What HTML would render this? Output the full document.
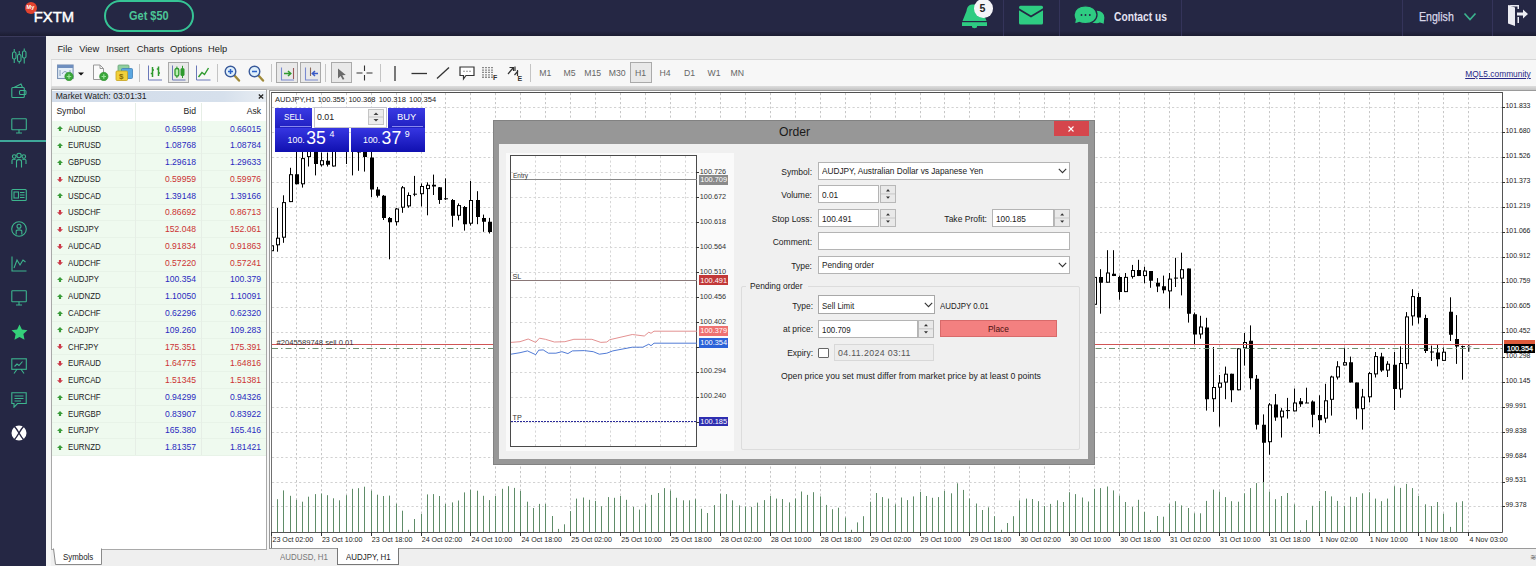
<!DOCTYPE html><html><head><meta charset="utf-8"><style>
*{box-sizing:border-box;margin:0;padding:0}
html,body{width:1536px;height:566px;overflow:hidden;background:#f0f0f0;font-family:"Liberation Sans", sans-serif;}
.a{position:absolute}
.t{position:absolute;white-space:nowrap;line-height:1}
</style></head><body>
<div class="a" style="left:0;top:0;width:1536px;height:36px;background:#252744"></div>
<div class="a" style="left:0;top:36px;width:46px;height:530px;background:#252744"></div>
<div class="a" style="left:0;top:31px;width:1536px;height:5px;background:linear-gradient(rgba(20,20,35,0),rgba(20,20,35,0.55))"></div>
<div class="a" style="left:24.5px;top:1.5px;width:12px;height:12px;border-radius:50%;background:#e2432f"></div>
<div class="t" style="left:26.6px;top:4.8px;font-size:5.6px;font-weight:bold;color:#fff">My</div>
<div class="t" style="left:33.8px;top:9.8px;font-size:14.8px;color:#fff;-webkit-text-stroke:0.45px #fff">FXTM</div>
<div class="a" style="left:104px;top:0px;width:90px;height:32px;border:2px solid #36c495;border-radius:16px"></div>
<div class="t" style="left:128.5px;top:10px;font-size:12.2px;font-weight:bold;color:#4cc597;transform:scaleX(0.9);transform-origin:0 0">Get $50</div>
<div class="a" style="left:1003px;top:0;width:1px;height:36px;background:#34345a"></div>
<div class="a" style="left:1059px;top:0;width:1px;height:36px;background:#34345a"></div>
<div class="a" style="left:1181px;top:0;width:1px;height:36px;background:#34345a"></div>
<div class="a" style="left:1402px;top:0;width:1px;height:36px;background:#34345a"></div>
<div class="a" style="left:1492px;top:0;width:1px;height:36px;background:#34345a"></div>
<svg class="a" style="left:955px;top:0px" width="40" height="32" viewBox="0 0 40 32"><path d="M17 4.5 C13 5 12 8 11.5 11 L7.5 21 H31.5 L27.5 11 C27 8 25 5 21 4.5Z" fill="#2ecc82"/><path d="M7 22.2 H32 V26 H7Z" fill="#2ecc82"/><path d="M17 26 H22 V27 C22 28.5 17 28.5 17 27Z" fill="#2ecc82"/></svg>
<div class="a" style="left:974px;top:-0.8px;width:18.6px;height:18.6px;border-radius:50%;background:#f4f4f8"></div>
<div class="t" style="left:979.6px;top:3.2px;font-size:10.6px;font-weight:bold;color:#222">5</div>
<svg class="a" style="left:1018px;top:5px" width="26" height="21" viewBox="0 0 26 21"><rect x="1" y="0.8" width="24" height="18.8" rx="1.5" fill="#2ecc82"/><path d="M0.5 4 L13 11.5 L25.5 4" fill="none" stroke="#252744" stroke-width="1.9"/></svg>
<svg class="a" style="left:1072px;top:4px" width="34" height="23" viewBox="0 0 34 23"><path d="M25 6 C30 6 33 9.5 33 13.5 C33 16.5 32 18.5 32.5 20.5 L28 19.2 C27 19.7 26 20 25 20 C20 20 17 17 17 13 C17 9 20 6 25 6Z" fill="#2ecc82" stroke="#252744" stroke-width="1.3"/><path d="M13.5 1.8 C20 1.8 25 5.5 25 10.8 C25 16 20 19.6 13.5 19.6 C11 19.6 9 19.2 7.5 18.5 L2.5 20.2 L3.2 15.5 C2.3 14 2 12.5 2 10.8 C2 5.5 7 1.8 13.5 1.8Z" fill="#2ecc82" stroke="#252744" stroke-width="1.3"/><circle cx="9.5" cy="11" r="0.95" fill="#252744"/><circle cx="13.5" cy="11" r="0.95" fill="#252744"/><circle cx="17.8" cy="11" r="0.95" fill="#252744"/></svg>
<div class="t" style="left:1113.5px;top:11px;font-size:12.2px;font-weight:bold;color:#e4e2f2;transform:scaleX(0.84);transform-origin:0 0">Contact us</div>
<div class="t" style="left:1418.5px;top:11px;font-size:12.2px;color:#d8d6e8;-webkit-text-stroke:0.25px #d8d6e8;transform:scaleX(0.87);transform-origin:0 0">English</div>
<svg class="a" style="left:1463px;top:12px" width="14" height="10" viewBox="0 0 14 10"><path d="M1.5 1.5 L7 7.5 L12.5 1.5" fill="none" stroke="#3bb38e" stroke-width="1.7"/></svg>
<svg class="a" style="left:1507px;top:4px" width="22" height="23" viewBox="0 0 22 23"><path d="M1 1 H12 V5 H10.5 V2.5 H5 L1 1Z" fill="#e8e8f0"/><path d="M10.5 13 V19 H12 V13Z" fill="#e8e8f0"/><path d="M1 1 L8 3.5 V22 L1 19.5Z" fill="#ececf2"/><path d="M10 8.5 H16 V5.5 L21 10 L16 14.5 V11.5 H10Z" fill="#ececf2"/></svg>
<div class="a" style="left:0;top:36px;width:46px;height:1px;background:#3a3a5c"></div>
<div class="a" style="left:0;top:140px;width:46px;height:1.6px;background:#3fa89a"></div>
<svg class="a" style="left:11px;top:48px" width="16" height="16" viewBox="0 0 16 16" fill="none" stroke="#3db58e" stroke-width="1.1"><rect x="1.5" y="4" width="3.5" height="7" rx="1.5"/><path d="M3.25 1V4M3.25 11V15"/><rect x="6.5" y="6.5" width="3.5" height="7" rx="1.5"/><path d="M8.25 3V6.5M8.25 13.5V15.5"/><rect x="11.5" y="3" width="3.5" height="7" rx="1.5"/><path d="M13.25 0.5V3M13.25 10V15.5"/></svg>
<svg class="a" style="left:11px;top:82.5px" width="16" height="16" viewBox="0 0 16 16" fill="none" stroke="#3db58e" stroke-width="1.1"><rect x="0.8" y="4.5" width="12.5" height="10" rx="1"/><path d="M3 4.5 L10 1 L11.5 4.5"/><rect x="8.5" y="7.5" width="6.5" height="4" rx="1"/></svg>
<svg class="a" style="left:11px;top:117.5px" width="16" height="16" viewBox="0 0 16 16" fill="none" stroke="#3db58e" stroke-width="1.1"><rect x="0.8" y="0.8" width="14.5" height="11" rx="0.5"/><path d="M8 11.8V14.5M5 15H11"/></svg>
<svg class="a" style="left:11px;top:152px" width="16" height="16" viewBox="0 0 16 16" fill="none" stroke="#3db58e" stroke-width="1.1"><circle cx="8" cy="3.5" r="2.2"/><circle cx="3.2" cy="4.5" r="1.8"/><circle cx="12.8" cy="4.5" r="1.8"/><path d="M5.5 15.5V9.5C5.5 7 10.5 7 10.5 9.5V15.5"/><path d="M1 12V8.5C1 7 3 6.8 4.5 7.5M15 12V8.5C15 7 13 6.8 11.5 7.5"/></svg>
<svg class="a" style="left:11px;top:187px" width="16" height="16" viewBox="0 0 16 16" fill="none" stroke="#3db58e" stroke-width="1.1"><rect x="0.8" y="2.5" width="14.5" height="11" rx="1"/><rect x="3" y="5" width="4.5" height="6"/><path d="M9 5.5H13.5M9 8H13.5M9 10.5H13.5"/></svg>
<svg class="a" style="left:11px;top:221px" width="16" height="16" viewBox="0 0 16 16" fill="none" stroke="#3db58e" stroke-width="1.1"><circle cx="8" cy="8" r="7.3"/><circle cx="8" cy="5.3" r="2"/><path d="M5.2 13.5V10C5.2 8.5 10.8 8.5 10.8 10V13.5"/></svg>
<svg class="a" style="left:11px;top:255.5px" width="16" height="16" viewBox="0 0 16 16" fill="none" stroke="#3db58e" stroke-width="1.1"><path d="M1 0.5V15H15.5"/><path d="M3 12 L6 4 L9 9 L12 4 L14.5 6"/></svg>
<svg class="a" style="left:11px;top:289.5px" width="16" height="16" viewBox="0 0 16 16" fill="none" stroke="#3db58e" stroke-width="1.1"><rect x="0.8" y="0.8" width="14.5" height="11" rx="0.5"/><path d="M8 11.8V14.5M5 15H11"/></svg>
<svg class="a" style="left:10.5px;top:323.5px" width="17" height="17" viewBox="0 0 17 17"><path d="M8.5 0.5 L10.9 5.6 L16.5 6.3 L12.4 10.1 L13.5 15.8 L8.5 13 L3.5 15.8 L4.6 10.1 L0.5 6.3 L6.1 5.6Z" fill="#35d07a"/></svg>
<svg class="a" style="left:11px;top:358px" width="16" height="16" viewBox="0 0 16 16" fill="none" stroke="#3db58e" stroke-width="1.1"><rect x="0.8" y="0.8" width="14.5" height="10.5"/><path d="M3.5 8.5 L6 6 L8 7.5 L11.5 3.5M3 15.5 L6 11.3M13 15.5 L10 11.3"/></svg>
<svg class="a" style="left:11px;top:392px" width="16" height="16" viewBox="0 0 16 16" fill="none" stroke="#3db58e" stroke-width="1.1"><path d="M0.8 0.8H15.2V11.5H6.5L3 15.2V11.5H0.8Z"/><path d="M3.5 4H12.5M3.5 6.5H12.5M3.5 9H10"/></svg>
<svg class="a" style="left:11px;top:424.5px" width="16" height="16" viewBox="0 0 16 16"><circle cx="8" cy="8" r="7.5" fill="#fff"/><path d="M3.5 1.5 C7 5 9 11 12.5 14.5 M12.5 1.5 C9 5 7 11 3.5 14.5" stroke="#232340" stroke-width="1.4" fill="none"/></svg>
<div class="a" style="left:46px;top:36px;width:1490px;height:530px;background:#f0f0f0"></div>
<div class="a" style="left:46px;top:36px;width:1490px;height:530px;background:#f6f6f6"></div>
<div class="a" style="left:46px;top:36px;width:1490px;height:23.5px;background:#efefef"></div>
<div class="a" style="left:51px;top:59px;width:1485px;height:1px;background:#d8d8d8"></div>
<div class="t" style="left:57.4px;top:44.8px;font-size:9.3px;color:#222">File</div>
<div class="t" style="left:79.2px;top:44.8px;font-size:9.3px;color:#222">View</div>
<div class="t" style="left:106.2px;top:44.8px;font-size:9.3px;color:#222">Insert</div>
<div class="t" style="left:136.8px;top:44.8px;font-size:9.3px;color:#222">Charts</div>
<div class="t" style="left:170px;top:44.8px;font-size:9.3px;color:#222">Options</div>
<div class="t" style="left:208px;top:44.8px;font-size:9.3px;color:#222">Help</div>
<div class="a" style="left:51px;top:60px;width:1485px;height:27px;background:#f7f7f7;border-left:1px solid #e4e4e4"></div>
<div class="a" style="left:51px;top:86px;width:1485px;height:4px;background:linear-gradient(#dedede,#c4c4c4)"></div>
<div class="a" style="left:51px;top:548.5px;width:1485px;height:17.5px;background:#efefef"></div>
<svg class="a" style="left:57px;top:64px" width="28" height="17" viewBox="0 0 28 17"><rect x="0.6" y="1" width="15.5" height="13.5" fill="#e4eef8" stroke="#7b93b5" stroke-width="1.1"/><rect x="0.6" y="1" width="15.5" height="3" fill="#6f8fbf"/><path d="M3 12 V6 M5 10 Q8 5 11 10 M13 6 V12" stroke="#7f97b7" fill="none" stroke-width="0.9"/><circle cx="12" cy="12.5" r="4.2" fill="#3aa63a" stroke="#2f8f2f" stroke-width="0.6"/><path d="M12 10.3V14.7M9.8 12.5H14.2" stroke="#9be39b" stroke-width="1.2"/><path d="M21 8.5 H27 L24 11.5Z" fill="#111"/></svg>
<svg class="a" style="left:92px;top:64px" width="17" height="17" viewBox="0 0 17 17"><path d="M1.5 1 H8 L11.5 4.5 V15.5 H1.5Z" fill="#fbfbfb" stroke="#999" stroke-width="1"/><path d="M8 1 V4.5 H11.5" fill="none" stroke="#999"/><circle cx="11.8" cy="12.5" r="4.2" fill="#3aa63a" stroke="#2f8f2f" stroke-width="0.6"/><path d="M11.8 10.3V14.7M9.6 12.5H14" stroke="#9be39b" stroke-width="1.2"/></svg>
<svg class="a" style="left:115px;top:64px" width="19" height="18" viewBox="0 0 19 18"><rect x="3" y="1" width="11" height="9" rx="1" fill="#8fcf9f" stroke="#6aa37a" stroke-width="0.8"/><rect x="6.5" y="4.5" width="11" height="10" rx="1" fill="#5aa6e0" stroke="#3f7fb8" stroke-width="0.8"/><rect x="1" y="7" width="11.5" height="9.5" rx="1" fill="#f2d03a" stroke="#c5a21e" stroke-width="0.8"/><text x="4" y="15" font-size="8" font-weight="bold" fill="#8a6a00" font-family="Liberation Sans">$</text></svg>
<div class="a" style="left:139px;top:64px;width:1px;height:18px;background:#c4c4c4"></div>
<svg class="a" style="left:147px;top:65px" width="16" height="17" viewBox="0 0 16 17"><path d="M1.5 0.5 V15 H15" fill="none" stroke="#6a78b8" stroke-width="1"/><path d="M5.5 2 V12 M3.8 8.5 H5.5 M5.5 5 H7 M11.5 1.5 V11 M9.8 4 H11.5 M11.5 8 H13" stroke="#2e9a2e" stroke-width="1.5"/></svg>
<div class="a" style="left:167.8px;top:62.4px;width:20.799999999999983px;height:21px;background:#e9e9e9;border:1px solid #aaaaaa"></div>
<svg class="a" style="left:171px;top:65px" width="16" height="17" viewBox="0 0 16 17"><path d="M1.5 0.5 V15 H14.5" fill="none" stroke="#6a78b8" stroke-width="1"/><rect x="4" y="3.5" width="3.8" height="7.5" rx="1.6" fill="#b8f0b0" stroke="#2e9a2e" stroke-width="1.3"/><path d="M5.9 1.5V3.5M5.9 11V13" stroke="#2e9a2e" stroke-width="1"/><rect x="9.5" y="3" width="4" height="8" rx="1.6" fill="#2e9a2e"/><path d="M11.5 0.8V3M11.5 11V13" stroke="#2e9a2e" stroke-width="1"/></svg>
<svg class="a" style="left:195px;top:65px" width="17" height="17" viewBox="0 0 17 17"><path d="M1.5 0.5 V15 H15.5" fill="none" stroke="#6a78b8" stroke-width="1"/><path d="M3.5 12 L7 7.5 L9.5 9.5 L13.5 3" fill="none" stroke="#2e9a2e" stroke-width="1.4"/></svg>
<div class="a" style="left:217px;top:64px;width:1px;height:18px;background:#c4c4c4"></div>
<svg class="a" style="left:224px;top:65px" width="17" height="17" viewBox="0 0 17 17"><path d="M10 10 L15 15.5" stroke="#a08a3a" stroke-width="2.4" stroke-linecap="round"/><circle cx="6.5" cy="6.5" r="5.3" fill="#e0f0fb" stroke="#3a5a9a" stroke-width="1.4"/><path d="M6.5 4V9M4 6.5H9" stroke="#2b62c8" stroke-width="1.5"/></svg>
<svg class="a" style="left:248px;top:65px" width="17" height="17" viewBox="0 0 17 17"><path d="M10 10 L15 15.5" stroke="#a08a3a" stroke-width="2.4" stroke-linecap="round"/><circle cx="6.5" cy="6.5" r="5.3" fill="#e0f0fb" stroke="#3a5a9a" stroke-width="1.4"/><path d="M4 6.5H9" stroke="#2b62c8" stroke-width="1.5"/></svg>
<div class="a" style="left:271px;top:64px;width:1px;height:18px;background:#c4c4c4"></div>
<div class="a" style="left:276.2px;top:62.4px;width:21.5px;height:21px;background:#e9e9e9;border:1px solid #aaaaaa"></div>
<svg class="a" style="left:278px;top:64px" width="18" height="18" viewBox="0 0 18 18"><path d="M3.5 3.5 V16 H16" fill="none" stroke="#7a8ad0" stroke-width="1.1"/><path d="M15.5 4 V15" stroke="#9a5a5a" stroke-width="1.1"/><path d="M6 9.5 H12.5 M10 7 L12.8 9.5 L10 12" fill="none" stroke="#2e9a2e" stroke-width="1.5"/></svg>
<div class="a" style="left:300.2px;top:62.4px;width:20.80000000000001px;height:21px;background:#e9e9e9;border:1px solid #aaaaaa"></div>
<svg class="a" style="left:302px;top:64px" width="18" height="18" viewBox="0 0 18 18"><path d="M3.5 3.5 V16 H16" fill="none" stroke="#7a8ad0" stroke-width="1.1"/><path d="M8.5 3.5 V12" stroke="#8a6a5a" stroke-width="1.1"/><path d="M10.5 9.5 H16 M13 7 L10.3 9.5 L13 12" fill="none" stroke="#3a5ac8" stroke-width="1.5"/></svg>
<div class="a" style="left:325px;top:64px;width:1px;height:18px;background:#c4c4c4"></div>
<div class="a" style="left:330.5px;top:62.4px;width:21.19999999999999px;height:21px;background:#e9e9e9;border:1px solid #aaaaaa"></div>
<svg class="a" style="left:336px;top:67px" width="12" height="14" viewBox="0 0 12 14"><path d="M2 1.5 L2 11.5 L4.6 9 L6.8 12.8 L8.4 12 L6.3 8.2 L9.8 8Z" fill="#6a6a6a"/></svg>
<svg class="a" style="left:356px;top:65px" width="18" height="17" viewBox="0 0 18 17"><path d="M8.5 0.5V6 M8.5 10V15.5 M0.5 8H6.5 M10.5 8H16.5" stroke="#333" stroke-width="1.1"/></svg>
<div class="a" style="left:379.5px;top:64px;width:1px;height:18px;background:#c4c4c4"></div>
<svg class="a" style="left:393px;top:65px" width="4" height="17" viewBox="0 0 4 17"><path d="M2 1V16" stroke="#333" stroke-width="1.3"/></svg>
<svg class="a" style="left:411px;top:72px" width="17" height="3" viewBox="0 0 17 3"><path d="M0.5 1.5H16" stroke="#333" stroke-width="1.3"/></svg>
<svg class="a" style="left:436px;top:66px" width="14" height="14" viewBox="0 0 14 14"><path d="M1 12.5 L13 1.5" stroke="#333" stroke-width="1.3"/></svg>
<svg class="a" style="left:459px;top:66px" width="16" height="15" viewBox="0 0 16 15"><path d="M1 1 H15 V9.5 H7 L4.5 13 V9.5 H1Z" fill="#fff" stroke="#333" stroke-width="1.2"/><path d="M4.5 5.3H5.5M7.5 5.3H8.5M10.5 5.3H11.5" stroke="#333" stroke-width="1.1"/></svg>
<svg class="a" style="left:482px;top:66px" width="17" height="15" viewBox="0 0 17 15"><path d="M1 1V12 M4 1V12 M7 1V12 M10 1V12" stroke="#333" stroke-width="1.1" stroke-dasharray="1.3 1.1"/><text x="11" y="14" font-size="7" font-weight="bold" fill="#333" font-family="Liberation Sans">F</text></svg>
<svg class="a" style="left:507px;top:65px" width="17" height="16" viewBox="0 0 17 16"><path d="M1 9 L6 3 M2.5 2.5 H6.5 V6" fill="none" stroke="#333" stroke-width="1.2"/><path d="M7.5 10 L11 6 M8 1.5 V6 M10.5 5 V11" fill="none" stroke="#333" stroke-width="1.2"/><text x="10.5" y="15.5" font-size="7" font-weight="bold" fill="#333" font-family="Liberation Sans">E</text></svg>
<div class="a" style="left:530px;top:64px;width:1px;height:18px;background:#c4c4c4"></div>
<div class="t" style="left:539.2px;top:69px;font-size:8.7px;color:#666">M1</div>
<div class="t" style="left:563.5px;top:69px;font-size:8.7px;color:#666">M5</div>
<div class="t" style="left:584.2px;top:69px;font-size:8.7px;color:#666">M15</div>
<div class="t" style="left:608.8px;top:69px;font-size:8.7px;color:#666">M30</div>
<div class="a" style="left:630.3px;top:62.4px;width:21.5px;height:21px;background:#e9e9e9;border:1px solid #aaaaaa"></div>
<div class="t" style="left:635px;top:69px;font-size:8.7px;color:#666">H1</div>
<div class="t" style="left:659.5px;top:69px;font-size:8.7px;color:#666">H4</div>
<div class="t" style="left:684px;top:69px;font-size:8.7px;color:#666">D1</div>
<div class="t" style="left:707.6px;top:69px;font-size:8.7px;color:#666">W1</div>
<div class="t" style="left:730.4px;top:69px;font-size:8.7px;color:#666">MN</div>
<div class="t" style="left:1465.2px;top:70px;font-size:8.4px;color:#2a2a88;text-decoration:underline">MQL5.community</div>
<div class="a" style="left:51px;top:89px;width:216px;height:461px;background:#fff;border:1px solid #a9a9a9"></div>
<div class="a" style="left:52px;top:90.5px;width:214px;height:11.2px;background:linear-gradient(90deg,#d2dcea,#d6e0ec 80%,#e8edf3)"></div>
<div class="t" style="left:55.7px;top:92px;font-size:8.6px;color:#222">Market Watch: 03:01:31</div>
<svg class="a" style="left:257.5px;top:93.8px" width="6" height="5" viewBox="0 0 6 5"><path d="M0.8 0.5L5.2 4.5M5.2 0.5L0.8 4.5" stroke="#222" stroke-width="1.2"/></svg>
<div class="t" style="left:56.4px;top:107px;font-size:8.6px;color:#222">Symbol</div>
<div class="t" style="left:150px;width:46px;text-align:right;top:107px;font-size:8.6px;color:#222">Bid</div>
<div class="t" style="left:215px;width:46px;text-align:right;top:107px;font-size:8.6px;color:#222">Ask</div>
<div class="a" style="left:52px;top:120.6px;width:214px;height:335.4px;background:#effaef"></div>
<div class="a" style="left:52px;top:136.4px;width:214px;height:1px;background:#e8f3e8"></div>
<svg class="a" style="left:57.2px;top:126.2px" width="6" height="5.2" viewBox="0 0 6 5.2"><path d="M3 0 L6 3 H4.1 V5.2 H1.9 V3 H0Z" fill="#3a9c3a"/></svg>
<div class="t" style="left:68px;top:124.5px;font-size:8.7px;color:#222;transform:scaleX(0.9);transform-origin:0 0">AUDUSD</div>
<div class="t" style="left:140px;width:56px;text-align:right;top:124.5px;font-size:8.6px;color:#2a2ac0">0.65998</div>
<div class="t" style="left:205px;width:56px;text-align:right;top:124.5px;font-size:8.6px;color:#2a2ac0">0.66015</div>
<div class="a" style="left:52px;top:153.1px;width:214px;height:1px;background:#e8f3e8"></div>
<svg class="a" style="left:57.2px;top:143.0px" width="6" height="5.2" viewBox="0 0 6 5.2"><path d="M3 0 L6 3 H4.1 V5.2 H1.9 V3 H0Z" fill="#3a9c3a"/></svg>
<div class="t" style="left:68px;top:141.3px;font-size:8.7px;color:#222;transform:scaleX(0.9);transform-origin:0 0">EURUSD</div>
<div class="t" style="left:140px;width:56px;text-align:right;top:141.3px;font-size:8.6px;color:#2a2ac0">1.08768</div>
<div class="t" style="left:205px;width:56px;text-align:right;top:141.3px;font-size:8.6px;color:#2a2ac0">1.08784</div>
<div class="a" style="left:52px;top:169.9px;width:214px;height:1px;background:#e8f3e8"></div>
<svg class="a" style="left:57.2px;top:159.7px" width="6" height="5.2" viewBox="0 0 6 5.2"><path d="M3 0 L6 3 H4.1 V5.2 H1.9 V3 H0Z" fill="#3a9c3a"/></svg>
<div class="t" style="left:68px;top:158.0px;font-size:8.7px;color:#222;transform:scaleX(0.9);transform-origin:0 0">GBPUSD</div>
<div class="t" style="left:140px;width:56px;text-align:right;top:158.0px;font-size:8.6px;color:#2a2ac0">1.29618</div>
<div class="t" style="left:205px;width:56px;text-align:right;top:158.0px;font-size:8.6px;color:#2a2ac0">1.29633</div>
<div class="a" style="left:52px;top:186.7px;width:214px;height:1px;background:#e8f3e8"></div>
<svg class="a" style="left:57.2px;top:176.5px" width="6" height="5.2" viewBox="0 0 6 5.2"><path d="M3 5.2 L6 2.2 H4.1 V0 H1.9 V2.2 H0Z" fill="#cc3848"/></svg>
<div class="t" style="left:68px;top:174.8px;font-size:8.7px;color:#222;transform:scaleX(0.9);transform-origin:0 0">NZDUSD</div>
<div class="t" style="left:140px;width:56px;text-align:right;top:174.8px;font-size:8.6px;color:#cc3333">0.59959</div>
<div class="t" style="left:205px;width:56px;text-align:right;top:174.8px;font-size:8.6px;color:#cc3333">0.59976</div>
<div class="a" style="left:52px;top:203.5px;width:214px;height:1px;background:#e8f3e8"></div>
<svg class="a" style="left:57.2px;top:193.3px" width="6" height="5.2" viewBox="0 0 6 5.2"><path d="M3 0 L6 3 H4.1 V5.2 H1.9 V3 H0Z" fill="#3a9c3a"/></svg>
<div class="t" style="left:68px;top:191.6px;font-size:8.7px;color:#222;transform:scaleX(0.9);transform-origin:0 0">USDCAD</div>
<div class="t" style="left:140px;width:56px;text-align:right;top:191.6px;font-size:8.6px;color:#2a2ac0">1.39148</div>
<div class="t" style="left:205px;width:56px;text-align:right;top:191.6px;font-size:8.6px;color:#2a2ac0">1.39166</div>
<div class="a" style="left:52px;top:220.2px;width:214px;height:1px;background:#e8f3e8"></div>
<svg class="a" style="left:57.2px;top:210.0px" width="6" height="5.2" viewBox="0 0 6 5.2"><path d="M3 5.2 L6 2.2 H4.1 V0 H1.9 V2.2 H0Z" fill="#cc3848"/></svg>
<div class="t" style="left:68px;top:208.3px;font-size:8.7px;color:#222;transform:scaleX(0.9);transform-origin:0 0">USDCHF</div>
<div class="t" style="left:140px;width:56px;text-align:right;top:208.3px;font-size:8.6px;color:#cc3333">0.86692</div>
<div class="t" style="left:205px;width:56px;text-align:right;top:208.3px;font-size:8.6px;color:#cc3333">0.86713</div>
<div class="a" style="left:52px;top:237.0px;width:214px;height:1px;background:#e8f3e8"></div>
<svg class="a" style="left:57.2px;top:226.8px" width="6" height="5.2" viewBox="0 0 6 5.2"><path d="M3 5.2 L6 2.2 H4.1 V0 H1.9 V2.2 H0Z" fill="#cc3848"/></svg>
<div class="t" style="left:68px;top:225.1px;font-size:8.7px;color:#222;transform:scaleX(0.9);transform-origin:0 0">USDJPY</div>
<div class="t" style="left:140px;width:56px;text-align:right;top:225.1px;font-size:8.6px;color:#cc3333">152.048</div>
<div class="t" style="left:205px;width:56px;text-align:right;top:225.1px;font-size:8.6px;color:#cc3333">152.061</div>
<div class="a" style="left:52px;top:253.8px;width:214px;height:1px;background:#e8f3e8"></div>
<svg class="a" style="left:57.2px;top:243.6px" width="6" height="5.2" viewBox="0 0 6 5.2"><path d="M3 5.2 L6 2.2 H4.1 V0 H1.9 V2.2 H0Z" fill="#cc3848"/></svg>
<div class="t" style="left:68px;top:241.9px;font-size:8.7px;color:#222;transform:scaleX(0.9);transform-origin:0 0">AUDCAD</div>
<div class="t" style="left:140px;width:56px;text-align:right;top:241.9px;font-size:8.6px;color:#cc3333">0.91834</div>
<div class="t" style="left:205px;width:56px;text-align:right;top:241.9px;font-size:8.6px;color:#cc3333">0.91863</div>
<div class="a" style="left:52px;top:270.5px;width:214px;height:1px;background:#e8f3e8"></div>
<svg class="a" style="left:57.2px;top:260.4px" width="6" height="5.2" viewBox="0 0 6 5.2"><path d="M3 5.2 L6 2.2 H4.1 V0 H1.9 V2.2 H0Z" fill="#cc3848"/></svg>
<div class="t" style="left:68px;top:258.7px;font-size:8.7px;color:#222;transform:scaleX(0.9);transform-origin:0 0">AUDCHF</div>
<div class="t" style="left:140px;width:56px;text-align:right;top:258.7px;font-size:8.6px;color:#cc3333">0.57220</div>
<div class="t" style="left:205px;width:56px;text-align:right;top:258.7px;font-size:8.6px;color:#cc3333">0.57241</div>
<div class="a" style="left:52px;top:287.3px;width:214px;height:1px;background:#e8f3e8"></div>
<svg class="a" style="left:57.2px;top:277.1px" width="6" height="5.2" viewBox="0 0 6 5.2"><path d="M3 0 L6 3 H4.1 V5.2 H1.9 V3 H0Z" fill="#3a9c3a"/></svg>
<div class="t" style="left:68px;top:275.4px;font-size:8.7px;color:#222;transform:scaleX(0.9);transform-origin:0 0">AUDJPY</div>
<div class="t" style="left:140px;width:56px;text-align:right;top:275.4px;font-size:8.6px;color:#2a2ac0">100.354</div>
<div class="t" style="left:205px;width:56px;text-align:right;top:275.4px;font-size:8.6px;color:#2a2ac0">100.379</div>
<div class="a" style="left:52px;top:304.1px;width:214px;height:1px;background:#e8f3e8"></div>
<svg class="a" style="left:57.2px;top:293.9px" width="6" height="5.2" viewBox="0 0 6 5.2"><path d="M3 0 L6 3 H4.1 V5.2 H1.9 V3 H0Z" fill="#3a9c3a"/></svg>
<div class="t" style="left:68px;top:292.2px;font-size:8.7px;color:#222;transform:scaleX(0.9);transform-origin:0 0">AUDNZD</div>
<div class="t" style="left:140px;width:56px;text-align:right;top:292.2px;font-size:8.6px;color:#2a2ac0">1.10050</div>
<div class="t" style="left:205px;width:56px;text-align:right;top:292.2px;font-size:8.6px;color:#2a2ac0">1.10091</div>
<div class="a" style="left:52px;top:320.8px;width:214px;height:1px;background:#e8f3e8"></div>
<svg class="a" style="left:57.2px;top:310.7px" width="6" height="5.2" viewBox="0 0 6 5.2"><path d="M3 0 L6 3 H4.1 V5.2 H1.9 V3 H0Z" fill="#3a9c3a"/></svg>
<div class="t" style="left:68px;top:309.0px;font-size:8.7px;color:#222;transform:scaleX(0.9);transform-origin:0 0">CADCHF</div>
<div class="t" style="left:140px;width:56px;text-align:right;top:309.0px;font-size:8.6px;color:#2a2ac0">0.62296</div>
<div class="t" style="left:205px;width:56px;text-align:right;top:309.0px;font-size:8.6px;color:#2a2ac0">0.62320</div>
<div class="a" style="left:52px;top:337.6px;width:214px;height:1px;background:#e8f3e8"></div>
<svg class="a" style="left:57.2px;top:327.4px" width="6" height="5.2" viewBox="0 0 6 5.2"><path d="M3 0 L6 3 H4.1 V5.2 H1.9 V3 H0Z" fill="#3a9c3a"/></svg>
<div class="t" style="left:68px;top:325.7px;font-size:8.7px;color:#222;transform:scaleX(0.9);transform-origin:0 0">CADJPY</div>
<div class="t" style="left:140px;width:56px;text-align:right;top:325.7px;font-size:8.6px;color:#2a2ac0">109.260</div>
<div class="t" style="left:205px;width:56px;text-align:right;top:325.7px;font-size:8.6px;color:#2a2ac0">109.283</div>
<div class="a" style="left:52px;top:354.4px;width:214px;height:1px;background:#e8f3e8"></div>
<svg class="a" style="left:57.2px;top:344.2px" width="6" height="5.2" viewBox="0 0 6 5.2"><path d="M3 5.2 L6 2.2 H4.1 V0 H1.9 V2.2 H0Z" fill="#cc3848"/></svg>
<div class="t" style="left:68px;top:342.5px;font-size:8.7px;color:#222;transform:scaleX(0.9);transform-origin:0 0">CHFJPY</div>
<div class="t" style="left:140px;width:56px;text-align:right;top:342.5px;font-size:8.6px;color:#cc3333">175.351</div>
<div class="t" style="left:205px;width:56px;text-align:right;top:342.5px;font-size:8.6px;color:#cc3333">175.391</div>
<div class="a" style="left:52px;top:371.1px;width:214px;height:1px;background:#e8f3e8"></div>
<svg class="a" style="left:57.2px;top:361.0px" width="6" height="5.2" viewBox="0 0 6 5.2"><path d="M3 5.2 L6 2.2 H4.1 V0 H1.9 V2.2 H0Z" fill="#cc3848"/></svg>
<div class="t" style="left:68px;top:359.3px;font-size:8.7px;color:#222;transform:scaleX(0.9);transform-origin:0 0">EURAUD</div>
<div class="t" style="left:140px;width:56px;text-align:right;top:359.3px;font-size:8.6px;color:#cc3333">1.64775</div>
<div class="t" style="left:205px;width:56px;text-align:right;top:359.3px;font-size:8.6px;color:#cc3333">1.64816</div>
<div class="a" style="left:52px;top:387.9px;width:214px;height:1px;background:#e8f3e8"></div>
<svg class="a" style="left:57.2px;top:377.8px" width="6" height="5.2" viewBox="0 0 6 5.2"><path d="M3 5.2 L6 2.2 H4.1 V0 H1.9 V2.2 H0Z" fill="#cc3848"/></svg>
<div class="t" style="left:68px;top:376.0px;font-size:8.7px;color:#222;transform:scaleX(0.9);transform-origin:0 0">EURCAD</div>
<div class="t" style="left:140px;width:56px;text-align:right;top:376.0px;font-size:8.6px;color:#cc3333">1.51345</div>
<div class="t" style="left:205px;width:56px;text-align:right;top:376.0px;font-size:8.6px;color:#cc3333">1.51381</div>
<div class="a" style="left:52px;top:404.7px;width:214px;height:1px;background:#e8f3e8"></div>
<svg class="a" style="left:57.2px;top:394.5px" width="6" height="5.2" viewBox="0 0 6 5.2"><path d="M3 0 L6 3 H4.1 V5.2 H1.9 V3 H0Z" fill="#3a9c3a"/></svg>
<div class="t" style="left:68px;top:392.8px;font-size:8.7px;color:#222;transform:scaleX(0.9);transform-origin:0 0">EURCHF</div>
<div class="t" style="left:140px;width:56px;text-align:right;top:392.8px;font-size:8.6px;color:#2a2ac0">0.94299</div>
<div class="t" style="left:205px;width:56px;text-align:right;top:392.8px;font-size:8.6px;color:#2a2ac0">0.94326</div>
<div class="a" style="left:52px;top:421.5px;width:214px;height:1px;background:#e8f3e8"></div>
<svg class="a" style="left:57.2px;top:411.3px" width="6" height="5.2" viewBox="0 0 6 5.2"><path d="M3 0 L6 3 H4.1 V5.2 H1.9 V3 H0Z" fill="#3a9c3a"/></svg>
<div class="t" style="left:68px;top:409.6px;font-size:8.7px;color:#222;transform:scaleX(0.9);transform-origin:0 0">EURGBP</div>
<div class="t" style="left:140px;width:56px;text-align:right;top:409.6px;font-size:8.6px;color:#2a2ac0">0.83907</div>
<div class="t" style="left:205px;width:56px;text-align:right;top:409.6px;font-size:8.6px;color:#2a2ac0">0.83922</div>
<div class="a" style="left:52px;top:438.2px;width:214px;height:1px;background:#e8f3e8"></div>
<svg class="a" style="left:57.2px;top:428.1px" width="6" height="5.2" viewBox="0 0 6 5.2"><path d="M3 0 L6 3 H4.1 V5.2 H1.9 V3 H0Z" fill="#3a9c3a"/></svg>
<div class="t" style="left:68px;top:426.4px;font-size:8.7px;color:#222;transform:scaleX(0.9);transform-origin:0 0">EURJPY</div>
<div class="t" style="left:140px;width:56px;text-align:right;top:426.4px;font-size:8.6px;color:#2a2ac0">165.380</div>
<div class="t" style="left:205px;width:56px;text-align:right;top:426.4px;font-size:8.6px;color:#2a2ac0">165.416</div>
<div class="a" style="left:52px;top:455.0px;width:214px;height:1px;background:#e8f3e8"></div>
<svg class="a" style="left:57.2px;top:444.8px" width="6" height="5.2" viewBox="0 0 6 5.2"><path d="M3 0 L6 3 H4.1 V5.2 H1.9 V3 H0Z" fill="#3a9c3a"/></svg>
<div class="t" style="left:68px;top:443.1px;font-size:8.7px;color:#222;transform:scaleX(0.9);transform-origin:0 0">EURNZD</div>
<div class="t" style="left:140px;width:56px;text-align:right;top:443.1px;font-size:8.6px;color:#2a2ac0">1.81357</div>
<div class="t" style="left:205px;width:56px;text-align:right;top:443.1px;font-size:8.6px;color:#2a2ac0">1.81421</div>
<div class="a" style="left:135px;top:103px;width:1px;height:352.4px;background:#e6eee6"></div>
<div class="a" style="left:201px;top:103px;width:1px;height:352.4px;background:#e6eee6"></div>
<svg class="a" style="left:50px;top:548px" width="56" height="18" viewBox="0 0 56 18"><path d="M3.5 0.5 L5.5 16.5 H51.5 V0.5" fill="#fff" stroke="#8a8a8a" stroke-width="1"/></svg>
<div class="t" style="left:62.6px;top:553px;font-size:8.6px;color:#222;transform:scaleX(0.92);transform-origin:0 0">Symbols</div>
<div class="a" style="left:269px;top:90px;width:1267px;height:459px;background:#fff;border:1px solid #9a9a9a;border-right:none"></div>
<div class="a" style="left:271px;top:92px;width:1232px;height:456px;border-left:1px solid #707070;border-top:1px solid #505050"></div>
<div class="t" style="left:280px;top:553px;font-size:8.6px;color:#777;transform:scaleX(0.92);transform-origin:0 0">AUDUSD, H1</div>
<div class="a" style="left:337px;top:548px;width:62px;height:17px;background:#fff;border:1px solid #777;border-top:none"></div>
<div class="t" style="left:346px;top:553px;font-size:8.6px;color:#222;transform:scaleX(0.92);transform-origin:0 0">AUDJPY, H1</div>
<svg class="a" style="left:0;top:0" width="1536" height="566" viewBox="0 0 1536 566">
<defs><clipPath id="pc"><rect x="272" y="93" width="1230" height="439"/></clipPath></defs>
<path d="M296.5 93V532 M321.5 93V532 M346.5 93V532 M371.5 93V532 M396.5 93V532 M421.5 93V532 M445.5 93V532 M470.5 93V532 M495.5 93V532 M520.5 93V532 M545.5 93V532 M570.5 93V532 M595.5 93V532 M620.5 93V532 M645.5 93V532 M670.5 93V532 M695.5 93V532 M720.5 93V532 M745.5 93V532 M770.5 93V532 M795.5 93V532 M820.5 93V532 M845.5 93V532 M870.5 93V532 M895.5 93V532 M920.5 93V532 M944.5 93V532 M969.5 93V532 M994.5 93V532 M1019.5 93V532 M1044.5 93V532 M1069.5 93V532 M1094.5 93V532 M1119.5 93V532 M1144.5 93V532 M1169.5 93V532 M1194.5 93V532 M1219.5 93V532 M1244.5 93V532 M1269.5 93V532 M1294.5 93V532 M1319.5 93V532 M1344.5 93V532 M1369.5 93V532 M1394.5 93V532 M1418.5 93V532 M1443.5 93V532 M1468.5 93V532" stroke="#c6c6c6" stroke-width="1" stroke-dasharray="2.2 2.3" fill="none"/>
<path d="M272 107.5H1502 M272 132.5H1502 M272 157.5H1502 M272 182.5H1502 M272 207.5H1502 M272 232.5H1502 M272 257.5H1502 M272 282.5H1502 M272 307.5H1502 M272 332.5H1502 M272 357.5H1502 M272 382.5H1502 M272 407.5H1502 M272 432.5H1502 M272 457.5H1502 M272 482.5H1502 M272 506.5H1502" stroke="#d2d2d2" stroke-width="1" stroke-dasharray="2.2 2.3" fill="none"/>
<path d="M277.5 499.2V532 M283.5 490.4V532 M290.5 495.8V532 M296.5 499.8V532 M302.5 501.7V532 M308.5 496.7V532 M315.5 494.1V532 M321.5 493.5V532 M327.5 495.2V532 M333.5 498.3V532 M339.5 500.3V532 M346.5 495.2V532 M352.5 488.8V532 M358.5 488.2V532 M364.5 486.7V532 M371.5 490.7V532 M377.5 494.7V532 M383.5 496.0V532 M389.5 495.6V532 M396.5 503.7V532 M402.5 510.7V532 M408.5 529.8V532 M414.5 519.0V532 M421.5 513.9V532 M427.5 494.4V532 M433.5 494.1V532 M439.5 496.0V532 M445.5 503.9V532 M452.5 502.4V532 M458.5 500.5V532 M464.5 492.4V532 M470.5 489.9V532 M477.5 490.7V532 M483.5 495.8V532 M489.5 500.1V532 M495.5 496.0V532 M502.5 488.8V532 M508.5 486.2V532 M514.5 487.9V532 M520.5 491.0V532 M527.5 501.7V532 M533.5 508.0V532 M539.5 503.9V532 M545.5 503.9V532 M552.5 516.0V532 M558.5 528.9V532 M564.5 524.3V532 M570.5 511.1V532 M576.5 498.6V532 M583.5 497.5V532 M589.5 499.8V532 M595.5 500.9V532 M601.5 506.2V532 M608.5 497.1V532 M614.5 497.8V532 M620.5 496.0V532 M626.5 499.8V532 M633.5 506.9V532 M639.5 509.6V532 M645.5 504.3V532 M651.5 494.9V532 M658.5 493.0V532 M664.5 488.1V532 M670.5 490.7V532 M676.5 497.8V532 M683.5 500.3V532 M689.5 500.3V532 M695.5 499.2V532 M701.5 508.8V532 M707.5 513.0V532 M714.5 505.1V532 M720.5 493.7V532 M726.5 494.1V532 M732.5 500.3V532 M739.5 505.4V532 M745.5 506.5V532 M751.5 506.9V532 M757.5 502.6V532 M764.5 500.1V532 M770.5 496.0V532 M776.5 498.6V532 M782.5 499.0V532 M789.5 502.4V532 M795.5 498.6V532 M801.5 491.5V532 M807.5 494.9V532 M813.5 492.2V532 M820.5 496.4V532 M826.5 504.9V532 M832.5 509.2V532 M838.5 507.7V532 M845.5 517.5V532 M851.5 529.8V532 M857.5 522.4V532 M863.5 516.2V532 M870.5 501.7V532 M876.5 493.0V532 M882.5 497.1V532 M888.5 498.6V532 M895.5 504.3V532 M901.5 497.5V532 M907.5 500.1V532 M913.5 496.4V532 M920.5 491.8V532 M926.5 496.0V532 M932.5 497.8V532 M938.5 497.1V532 M944.5 491.0V532 M951.5 493.3V532 M957.5 483.3V532 M963.5 489.9V532 M969.5 498.6V532 M976.5 503.5V532 M982.5 510.0V532 M988.5 507.3V532 M994.5 516.2V532 M1001.5 529.8V532 M1007.5 523.0V532 M1013.5 516.2V532 M1019.5 500.3V532 M1026.5 498.6V532 M1032.5 499.0V532 M1038.5 501.2V532 M1044.5 506.0V532 M1050.5 503.9V532 M1057.5 500.3V532 M1063.5 502.0V532 M1069.5 492.2V532 M1075.5 494.1V532 M1082.5 497.5V532 M1088.5 501.5V532 M1094.5 488.8V532 M1100.5 488.1V532 M1107.5 486.5V532 M1113.5 490.4V532 M1119.5 495.6V532 M1125.5 502.0V532 M1132.5 506.9V532 M1138.5 499.8V532 M1144.5 511.9V532 M1150.5 530.0V532 M1157.5 516.0V532 M1163.5 516.7V532 M1169.5 503.9V532 M1175.5 501.2V532 M1181.5 505.4V532 M1188.5 508.0V532 M1194.5 513.3V532 M1200.5 513.3V532 M1206.5 500.9V532 M1213.5 489.6V532 M1219.5 491.5V532 M1225.5 497.1V532 M1231.5 501.2V532 M1238.5 501.7V532 M1244.5 493.3V532 M1250.5 488.1V532 M1256.5 483.1V532 M1263.5 481.0V532 M1269.5 491.5V532 M1275.5 499.2V532 M1281.5 496.0V532 M1287.5 493.0V532 M1294.5 504.3V532 M1300.5 530.3V532 M1306.5 520.1V532 M1312.5 505.8V532 M1319.5 500.9V532 M1325.5 491.0V532 M1331.5 496.4V532 M1337.5 500.9V532 M1344.5 505.8V532 M1350.5 496.7V532 M1356.5 497.1V532 M1362.5 493.3V532 M1369.5 492.2V532 M1375.5 498.6V532 M1381.5 501.2V532 M1387.5 498.6V532 M1394.5 486.2V532 M1400.5 487.9V532 M1406.5 483.9V532 M1412.5 488.1V532 M1418.5 496.0V532 M1425.5 504.3V532 M1431.5 506.0V532 M1437.5 502.0V532 M1443.5 513.7V532 M1450.5 526.9V532 M1456.5 502.4V532 M1462.5 501.2V532" stroke="#5f8c68" stroke-width="1" fill="none"/>
<g clip-path="url(#pc)">
<path d="M271.5 242.0V255.0 M277.5 208.0V251.7 M283.5 195.3V242.8 M290.5 167.8V202.1 M296.5 140.0V184.3 M302.5 140.0V187.6 M308.5 140.0V166.5 M315.5 140.0V175.4 M321.5 152.5V166.5 M327.5 152.5V166.5 M333.5 140.0V166.5 M339.5 140.0V152.0 M346.5 140.0V164.0 M352.5 140.0V175.4 M358.5 140.0V170.8 M364.5 140.0V171.6 M371.5 150.0V197.0 M377.5 186.9V197.5 M383.5 195.0V220.0 M389.5 217.0V259.3 M396.5 208.0V225.5 M402.5 186.0V212.8 M408.5 192.4V207.7 M414.5 175.9V196.2 M413.0 194.2H417.0 M421.5 183.5V206.4 M427.5 182.3V215.3 M433.5 174.6V195.0 M439.5 187.0V203.9 M445.5 178.4V200.0 M444.0 198.8H448.0 M452.5 199.0V226.8 M458.5 203.4V220.4 M464.5 206.0V230.6 M470.5 181.0V225.5 M477.5 191.2V224.2 M483.5 214.6V231.8 M489.5 217.9V233.5 M1094.5 270.0V310.0 M1100.5 269.2V313.7 M1107.5 250.2V282.7 M1113.5 250.2V276.1 M1119.5 275.6V299.8 M1125.5 273.0V292.1 M1132.5 264.9V278.6 M1138.5 259.8V276.1 M1144.5 266.7V283.2 M1150.5 271.0V287.8 M1157.5 278.1V292.1 M1163.5 275.6V293.4 M1169.5 273.0V308.6 M1175.5 257.8V287.0 M1174.0 278.1H1178.0 M1181.5 252.7V295.4 M1188.5 268.5V322.6 M1194.5 312.5V344.2 M1200.5 315.8V338.7 M1206.5 317.8V410.6 M1213.5 347.0V411.9 M1219.5 375.0V426.6 M1225.5 366.6V399.2 M1231.5 373.7V402.2 M1238.5 348.3V390.3 M1244.5 333.0V365.6 M1250.5 325.4V389.5 M1256.5 375.0V429.5 M1263.5 414.4V482.0 M1269.5 403.0V454.7 M1275.5 394.0V420.8 M1281.5 408.1V437.5 M1287.5 397.9V418.6 M1286.0 410.6H1290.0 M1294.5 388.5V411.4 M1300.5 398.0V406.8 M1306.5 387.7V403.0 M1305.0 403.0H1309.0 M1312.5 400.4V427.3 M1319.5 395.3V433.9 M1325.5 383.8V422.7 M1331.5 375.7V415.6 M1337.5 361.2V379.5 M1344.5 347.7V365.5 M1350.5 356.6V382.6 M1356.5 382.6V419.4 M1362.5 388.9V429.6 M1369.5 371.9V402.4 M1375.5 352.0V377.5 M1381.5 352.8V371.9 M1387.5 361.2V377.0 M1394.5 352.0V410.0 M1400.5 346.4V397.8 M1406.5 312.1V368.8 M1412.5 289.2V325.6 M1418.5 293.0V323.6 M1425.5 314.7V353.0 M1431.5 345.6V360.9 M1430.0 352.0H1434.0 M1437.5 344.8V366.4 M1443.5 347.4V360.9 M1450.5 297.3V341.0 M1456.5 315.1V363.9 M1462.5 345.6V379.7 M1461.0 346.6H1465.0 M1468.5 344.8V351.7 M1467.0 346.6H1471.0" stroke="#000" stroke-width="1" fill="none"/>
<g fill="#fff" stroke="#000" stroke-width="1"><rect x="270.5" y="245.8" width="3" height="4.9"/><rect x="276.5" y="238.2" width="3" height="6.6"/><rect x="282.5" y="202.6" width="3" height="34.6"/><rect x="289.5" y="174.7" width="3" height="26.9"/><rect x="301.5" y="158.6" width="3" height="25.2"/><rect x="307.5" y="140.5" width="3" height="16.1"/><rect x="320.5" y="160.7" width="3" height="4.1"/><rect x="332.5" y="140.5" width="3" height="25.5"/><rect x="338.5" y="140.5" width="3" height="9.0"/><rect x="351.5" y="140.5" width="3" height="9.0"/><rect x="357.5" y="140.5" width="3" height="11.5"/><rect x="395.5" y="209.0" width="3" height="12.7"/><rect x="401.5" y="187.8" width="3" height="19.4"/><rect x="407.5" y="195.5" width="3" height="10.4"/><rect x="420.5" y="186.5" width="3" height="7.2"/><rect x="426.5" y="185.3" width="3" height="3.3"/><rect x="457.5" y="205.6" width="3" height="9.7"/><rect x="469.5" y="200.5" width="3" height="22.7"/><rect x="1093.5" y="277.4" width="3" height="26.9"/><rect x="1106.5" y="273.0" width="3" height="9.2"/><rect x="1124.5" y="277.4" width="3" height="14.2"/><rect x="1131.5" y="270.5" width="3" height="5.9"/><rect x="1143.5" y="271.0" width="3" height="4.6"/><rect x="1168.5" y="279.1" width="3" height="11.8"/><rect x="1180.5" y="269.7" width="3" height="8.4"/><rect x="1199.5" y="327.0" width="3" height="7.0"/><rect x="1212.5" y="387.5" width="3" height="11.2"/><rect x="1218.5" y="383.1" width="3" height="4.1"/><rect x="1224.5" y="374.2" width="3" height="7.9"/><rect x="1237.5" y="348.8" width="3" height="41.0"/><rect x="1243.5" y="342.5" width="3" height="5.3"/><rect x="1268.5" y="404.9" width="3" height="36.8"/><rect x="1280.5" y="411.1" width="3" height="5.8"/><rect x="1293.5" y="403.0" width="3" height="7.9"/><rect x="1324.5" y="400.8" width="3" height="17.3"/><rect x="1330.5" y="377.0" width="3" height="22.3"/><rect x="1336.5" y="366.8" width="3" height="10.2"/><rect x="1343.5" y="362.7" width="3" height="2.3"/><rect x="1361.5" y="397.0" width="3" height="11.7"/><rect x="1368.5" y="373.6" width="3" height="23.2"/><rect x="1374.5" y="356.6" width="3" height="17.3"/><rect x="1386.5" y="364.2" width="3" height="5.9"/><rect x="1399.5" y="363.5" width="3" height="25.5"/><rect x="1405.5" y="316.9" width="3" height="46.8"/><rect x="1411.5" y="296.6" width="3" height="19.3"/><rect x="1442.5" y="352.2" width="3" height="8.2"/></g>
<path d="M295.0 174.2H299.0V184.3H295.0Z M314.0 140.0H318.0V164.0H314.0Z M326.0 160.7H330.0V164.7H326.0Z M345.0 140.0H349.0V148.0H345.0Z M363.0 140.0H367.0V157.1H363.0Z M370.0 157.6H374.0V189.4H370.0Z M376.0 189.4H380.0V195.8H376.0Z M382.0 195.8H386.0V218.0H382.0Z M388.0 218.0H392.0V222.3H388.0Z M432.0 184.8H436.0V186.6H432.0Z M438.0 187.3H442.0V200.0H438.0Z M451.0 200.0H455.0V215.8H451.0Z M463.0 206.9H467.0V224.2H463.0Z M476.0 200.0H480.0V217.1H476.0Z M482.0 217.9H486.0V221.7H482.0Z M488.0 221.7H492.0V232.1H488.0Z M1099.0 276.9H1103.0V282.7H1099.0Z M1112.0 273.8H1116.0V276.1H1112.0Z M1118.0 276.9H1122.0V292.1H1118.0Z M1137.0 270.0H1141.0V276.1H1137.0Z M1149.0 271.0H1153.0V280.7H1149.0Z M1156.0 282.7H1160.0V286.5H1156.0Z M1162.0 286.3H1166.0V290.3H1162.0Z M1187.0 268.5H1191.0V313.7H1187.0Z M1193.0 314.2H1197.0V334.6H1193.0Z M1205.0 327.5H1209.0V399.2H1205.0Z M1230.0 373.7H1234.0V390.3H1230.0Z M1249.0 340.7H1253.0V378.3H1249.0Z M1255.0 378.8H1259.0V424.8H1255.0Z M1262.0 424.8H1266.0V442.7H1262.0Z M1274.0 404.4H1278.0V417.6H1274.0Z M1299.0 401.2H1303.0V404.2H1299.0Z M1311.0 401.5H1315.0V414.8H1311.0Z M1318.0 415.1H1322.0V420.2H1318.0Z M1349.0 362.2H1353.0V382.6H1349.0Z M1355.0 382.6H1359.0V408.5H1355.0Z M1380.0 356.6H1384.0V370.6H1380.0Z M1393.0 364.8H1397.0V388.9H1393.0Z M1417.0 297.0H1421.0V317.4H1417.0Z M1424.0 318.0H1428.0V351.1H1424.0Z M1436.0 352.5H1440.0V359.3H1436.0Z M1449.0 311.8H1453.0V334.7H1449.0Z M1455.0 339.0H1459.0V346.6H1455.0Z" fill="#000"/>
</g>
<path d="M1469.5 344.8V351.7M1467.5 346.6H1471.5" stroke="#fff" stroke-width="1.2"/><path d="M1469.5 344.8V351.7M1467.5 346.6H1471.5" stroke="#9a9a9a" stroke-width="1"/>
<path d="M272 344.5H1502" stroke="#d05555" stroke-width="1"/>
<path d="M272 348.5H1502" stroke="#6f8f6f" stroke-width="1" stroke-dasharray="6 3 1.5 3"/>
<path d="M272 532.5H1502.5V92.5" stroke="#555" stroke-width="1" fill="none"/>
<path d="M1502 107.5H1505 M1502 132.5H1505 M1502 157.5H1505 M1502 182.5H1505 M1502 207.5H1505 M1502 232.5H1505 M1502 257.5H1505 M1502 282.5H1505 M1502 307.5H1505 M1502 332.5H1505 M1502 357.5H1505 M1502 382.5H1505 M1502 407.5H1505 M1502 432.5H1505 M1502 457.5H1505 M1502 482.5H1505 M1502 506.5H1505 M271.5 532V536 M321.5 532V536 M371.5 532V536 M421.5 532V536 M470.5 532V536 M520.5 532V536 M570.5 532V536 M620.5 532V536 M670.5 532V536 M720.5 532V536 M770.5 532V536 M820.5 532V536 M870.5 532V536 M920.5 532V536 M969.5 532V536 M1019.5 532V536 M1069.5 532V536 M1119.5 532V536 M1169.5 532V536 M1219.5 532V536 M1269.5 532V536 M1319.5 532V536 M1369.5 532V536 M1418.5 532V536 M1468.5 532V536" stroke="#333" stroke-width="1"/>
</svg>
<div class="t" style="left:1505.5px;top:103.3px;font-size:6.9px;color:#222">101.833</div>
<div class="t" style="left:1505.5px;top:128.2px;font-size:6.9px;color:#222">101.680</div>
<div class="t" style="left:1505.5px;top:153.2px;font-size:6.9px;color:#222">101.526</div>
<div class="t" style="left:1505.5px;top:178.1px;font-size:6.9px;color:#222">101.373</div>
<div class="t" style="left:1505.5px;top:203.1px;font-size:6.9px;color:#222">101.219</div>
<div class="t" style="left:1505.5px;top:228.0px;font-size:6.9px;color:#222">101.066</div>
<div class="t" style="left:1505.5px;top:252.9px;font-size:6.9px;color:#222">100.912</div>
<div class="t" style="left:1505.5px;top:277.9px;font-size:6.9px;color:#222">100.759</div>
<div class="t" style="left:1505.5px;top:302.8px;font-size:6.9px;color:#222">100.605</div>
<div class="t" style="left:1505.5px;top:327.8px;font-size:6.9px;color:#222">100.452</div>
<div class="t" style="left:1505.5px;top:352.7px;font-size:6.9px;color:#222">100.298</div>
<div class="t" style="left:1505.5px;top:377.6px;font-size:6.9px;color:#222">100.145</div>
<div class="t" style="left:1505.5px;top:402.6px;font-size:6.9px;color:#222">99.991</div>
<div class="t" style="left:1505.5px;top:427.5px;font-size:6.9px;color:#222">99.838</div>
<div class="t" style="left:1505.5px;top:452.5px;font-size:6.9px;color:#222">99.684</div>
<div class="t" style="left:1505.5px;top:477.4px;font-size:6.9px;color:#222">99.531</div>
<div class="t" style="left:1505.5px;top:502.3px;font-size:6.9px;color:#222">99.378</div>
<div class="t" style="left:272.5px;top:537.2px;font-size:7.1px;color:#222">23 Oct 02:00</div>
<div class="t" style="left:321.9px;top:537.2px;font-size:7.1px;color:#222">23 Oct 10:00</div>
<div class="t" style="left:371.8px;top:537.2px;font-size:7.1px;color:#222">23 Oct 18:00</div>
<div class="t" style="left:421.7px;top:537.2px;font-size:7.1px;color:#222">24 Oct 02:00</div>
<div class="t" style="left:471.5px;top:537.2px;font-size:7.1px;color:#222">24 Oct 10:00</div>
<div class="t" style="left:521.4px;top:537.2px;font-size:7.1px;color:#222">24 Oct 18:00</div>
<div class="t" style="left:571.3px;top:537.2px;font-size:7.1px;color:#222">25 Oct 02:00</div>
<div class="t" style="left:621.2px;top:537.2px;font-size:7.1px;color:#222">25 Oct 10:00</div>
<div class="t" style="left:671.1px;top:537.2px;font-size:7.1px;color:#222">25 Oct 18:00</div>
<div class="t" style="left:721.0px;top:537.2px;font-size:7.1px;color:#222">28 Oct 02:00</div>
<div class="t" style="left:770.9px;top:537.2px;font-size:7.1px;color:#222">28 Oct 10:00</div>
<div class="t" style="left:820.8px;top:537.2px;font-size:7.1px;color:#222">28 Oct 18:00</div>
<div class="t" style="left:870.7px;top:537.2px;font-size:7.1px;color:#222">29 Oct 02:00</div>
<div class="t" style="left:920.6px;top:537.2px;font-size:7.1px;color:#222">29 Oct 10:00</div>
<div class="t" style="left:970.5px;top:537.2px;font-size:7.1px;color:#222">29 Oct 18:00</div>
<div class="t" style="left:1020.4px;top:537.2px;font-size:7.1px;color:#222">30 Oct 02:00</div>
<div class="t" style="left:1070.3px;top:537.2px;font-size:7.1px;color:#222">30 Oct 10:00</div>
<div class="t" style="left:1120.2px;top:537.2px;font-size:7.1px;color:#222">30 Oct 18:00</div>
<div class="t" style="left:1170.1px;top:537.2px;font-size:7.1px;color:#222">31 Oct 02:00</div>
<div class="t" style="left:1220.0px;top:537.2px;font-size:7.1px;color:#222">31 Oct 10:00</div>
<div class="t" style="left:1269.9px;top:537.2px;font-size:7.1px;color:#222">31 Oct 18:00</div>
<div class="t" style="left:1319.8px;top:537.2px;font-size:7.1px;color:#222">1 Nov 02:00</div>
<div class="t" style="left:1369.7px;top:537.2px;font-size:7.1px;color:#222">1 Nov 10:00</div>
<div class="t" style="left:1419.6px;top:537.2px;font-size:7.1px;color:#222">1 Nov 18:00</div>
<div class="t" style="left:1469.5px;top:537.2px;font-size:7.1px;color:#222">4 Nov 03:00</div>
<div class="a" style="left:1504px;top:339.5px;width:31px;height:6px;background:#e05a3a"></div>
<div class="a" style="left:1504px;top:344px;width:31px;height:8.8px;background:#000"></div>
<div class="t" style="left:1507px;top:344.6px;font-size:7.2px;color:#fff;-webkit-text-stroke:0.25px #fff">100.354</div>
<div class="t" style="left:275px;top:96.2px;font-size:7.5px;color:#222">AUDJPY,H1</div>
<div class="t" style="left:317.8px;top:96.2px;font-size:7.5px;color:#222">100.355</div>
<div class="t" style="left:348.4px;top:96.2px;font-size:7.5px;color:#222">100.368</div>
<div class="t" style="left:378.7px;top:96.2px;font-size:7.5px;color:#222">100.318</div>
<div class="t" style="left:409px;top:96.2px;font-size:7.5px;color:#222">100.354</div>
<div class="t" style="left:276.6px;top:338.5px;font-size:7.6px;color:#333">#2045589748 sell 0.01</div>
<div class="a" style="left:275.2px;top:107.8px;width:37px;height:19.8px;background:linear-gradient(#3a3ae4,#2020c0)"></div>
<div class="t" style="left:284.4px;top:112.6px;font-size:9.2px;color:#fff;transform:scaleX(0.88);transform-origin:0 0">SELL</div>
<div class="a" style="left:387.7px;top:107.8px;width:36.9px;height:19.8px;background:linear-gradient(#3a3ae4,#2020c0)"></div>
<div class="t" style="left:397px;top:112.2px;font-size:9.4px;color:#fff">BUY</div>
<div class="a" style="left:313.8px;top:107.3px;width:72.8px;height:20.3px;background:#fff;border:1px solid #c4c4cc"></div>
<div class="t" style="left:317px;top:113px;font-size:8.8px;color:#222">0.01</div>
<div class="a" style="left:368.4px;top:109px;width:16px;height:16px;background:#ececec;border:1px solid #c4c4c4"></div>
<svg class="a" style="left:368.4px;top:109px" width="16" height="16" viewBox="0 0 16 16"><path d="M5.5 6 L8 3.5 L10.5 6Z M5.5 10 L8 12.5 L10.5 10Z" fill="#444"/><path d="M1 8H15" stroke="#c4c4c4"/></svg>
<div class="a" style="left:275.2px;top:127.6px;width:73.4px;height:24px;background:linear-gradient(#3636e2,#1010b0)"></div>
<div class="a" style="left:351.2px;top:127.6px;width:73.4px;height:24px;background:linear-gradient(#3636e2,#1010b0)"></div>
<div class="a" style="left:280px;top:126px;width:30.6px;height:1px;background:#8a8aee"></div>
<div class="a" style="left:392px;top:126px;width:30.6px;height:1px;background:#8a8aee"></div>
<div class="t" style="left:287.6px;top:136px;font-size:8.8px;color:#fff">100.</div>
<div class="t" style="left:306.2px;top:130px;font-size:17.6px;color:#fff">35</div>
<div class="t" style="left:329.6px;top:129.5px;font-size:8.9px;color:#fff">4</div>
<div class="t" style="left:363px;top:136px;font-size:8.8px;color:#fff">100.</div>
<div class="t" style="left:381.6px;top:130px;font-size:17.6px;color:#fff">37</div>
<div class="t" style="left:404.8px;top:129.5px;font-size:8.9px;color:#fff">9</div>
<div class="t" style="left:1530px;top:554px;font-size:8px;color:#666">&#8779;</div>
<div class="a" style="left:492.5px;top:120px;width:602px;height:344.5px;background:#979797;border:1px solid #828282"></div>
<div class="a" style="left:499px;top:144px;width:589px;height:314.6px;background:#f0f0f0"></div>
<div class="t" style="left:779px;top:126px;font-size:12.2px;color:#1a1a1a">Order</div>
<div class="a" style="left:1054.3px;top:120.5px;width:34.5px;height:15.5px;background:#d5464c"></div>
<svg class="a" style="left:1066px;top:123.5px" width="10" height="10" viewBox="0 0 10 10"><path d="M2.5 2.5L7.5 7.5M7.5 2.5L2.5 7.5" stroke="#fff" stroke-width="1.1"/></svg>
<div class="a" style="left:506px;top:152.5px;width:228px;height:298px;background:#fafafa"></div>
<svg class="a" style="left:0;top:0" width="1536" height="566" viewBox="0 0 1536 566"><rect x="510.5" y="155.5" width="186" height="291" fill="#fff" stroke="#4a4a4a" stroke-width="1"/><path d="M535.5 156V446 M560.5 156V446 M585.5 156V446 M610.5 156V446 M635.5 156V446 M660.5 156V446 M685.5 156V446 M511 172.5H696 M511 197.5H696 M511 222.5H696 M511 247.5H696 M511 272.5H696 M511 297.5H696 M511 322.5H696 M511 347.5H696 M511 372.5H696 M511 397.5H696 M511 422.5H696" stroke="#d6d6d6" stroke-dasharray="2.2 2.3" fill="none"/><path d="M696 172.5H699 M696 197.5H699 M696 222.5H699 M696 247.5H699 M696 272.5H699 M696 297.5H699 M696 322.5H699 M696 347.5H699 M696 372.5H699 M696 397.5H699 M696 422.5H699" stroke="#333"/><path d="M511 179.5H697" stroke="#888" stroke-width="1"/><path d="M511 280.5H697" stroke="#8a7878" stroke-width="1"/><path d="M511 421.5H697" stroke="#2a2a9a" stroke-width="1.2" stroke-dasharray="2 1"/><path d="M511 342.4 L520 341.7 L528.2 339 L535.7 342.4 L539.4 338.2 L545.4 339.3 L554.4 342 L564.9 341.7 L573.9 339.3 L591.9 339.3 L600.8 342.4 L606.8 342 L609.8 339.7 L632.3 334.5 L644.3 336 L648.8 332.2 L651 333.3 L654 331.2 L697 331.2" stroke="#e08585" stroke-width="0.9" fill="none"/><path d="M511 354.2 L520 352.7 L527.5 350.9 L535.7 354.7 L538.7 350.2 L543.2 349.9 L548.4 353.2 L555.9 353.2 L561.9 351.7 L567.9 353.6 L572.4 350.9 L584.4 350.6 L593.3 351.7 L599.3 354.2 L606.8 353.2 L612.8 350.9 L632.3 347.2 L642.8 347.2 L648.8 344.2 L651 345.7 L654 343.2 L697 343.2" stroke="#3d6cd0" stroke-width="0.9" fill="none"/></svg>
<div class="t" style="left:699.8px;top:167.9px;font-size:7.3px;color:#333">100.726</div>
<div class="t" style="left:699.8px;top:192.8px;font-size:7.3px;color:#333">100.672</div>
<div class="t" style="left:699.8px;top:217.8px;font-size:7.3px;color:#333">100.618</div>
<div class="t" style="left:699.8px;top:242.7px;font-size:7.3px;color:#333">100.564</div>
<div class="t" style="left:699.8px;top:267.6px;font-size:7.3px;color:#333">100.510</div>
<div class="t" style="left:699.8px;top:292.6px;font-size:7.3px;color:#333">100.456</div>
<div class="t" style="left:699.8px;top:317.5px;font-size:7.3px;color:#333">100.402</div>
<div class="t" style="left:699.8px;top:342.4px;font-size:7.3px;color:#333">100.348</div>
<div class="t" style="left:699.8px;top:367.3px;font-size:7.3px;color:#333">100.294</div>
<div class="t" style="left:699.8px;top:392.3px;font-size:7.3px;color:#333">100.240</div>
<div class="t" style="left:512.5px;top:171.5px;font-size:7.2px;color:#333;transform:scaleX(0.9);transform-origin:0 0">Entry</div>
<div class="t" style="left:512.5px;top:272.5px;font-size:7.2px;color:#333">SL</div>
<div class="t" style="left:512.5px;top:413.5px;font-size:7.2px;color:#333">TP</div>
<div class="a" style="left:698.8px;top:174.8px;width:29.4px;height:9.8px;background:#8a8a8a"></div>
<div class="t" style="left:700.3px;top:176.2px;font-size:7.4px;color:#fff">100.709</div>
<div class="a" style="left:698.8px;top:275.2px;width:29.4px;height:9.8px;background:#c23838"></div>
<div class="t" style="left:700.3px;top:276.6px;font-size:7.4px;color:#fff">100.491</div>
<div class="a" style="left:698.8px;top:325.8px;width:29.4px;height:9.8px;background:#ee7070"></div>
<div class="t" style="left:700.3px;top:327.2px;font-size:7.4px;color:#fff">100.379</div>
<div class="a" style="left:698.8px;top:337.8px;width:29.4px;height:9.8px;background:#2b62d8"></div>
<div class="t" style="left:700.3px;top:339.2px;font-size:7.4px;color:#fff">100.354</div>
<div class="a" style="left:698.8px;top:416.6px;width:29.4px;height:9.8px;background:#2e2eb0"></div>
<div class="t" style="left:700.3px;top:418.0px;font-size:7.4px;color:#fff">100.185</div>
<div class="t" style="left:692.4px;width:120px;text-align:right;top:168.2px;font-size:8.9px;color:#222;transform:scaleX(0.96);transform-origin:100% 0">Symbol:</div>
<div class="a" style="left:818.2px;top:161.7px;width:251.7px;height:18.0px;background:#fff;border:1px solid #b4b4b4"></div>
<div class="t" style="left:822px;top:167.2px;font-size:9.2px;color:#222;transform:scaleX(0.9);transform-origin:0 0">AUDJPY, Australian Dollar vs Japanese Yen</div>
<svg class="a" style="left:1058px;top:168px" width="9" height="6" viewBox="0 0 9 6"><path d="M0.8 0.8L4.5 4.6L8.2 0.8" stroke="#333" stroke-width="1.1" fill="none"/></svg>
<div class="t" style="left:692.4px;width:120px;text-align:right;top:191.2px;font-size:8.9px;color:#222;transform:scaleX(0.96);transform-origin:100% 0">Volume:</div>
<div class="a" style="left:818.2px;top:185.3px;width:61.3px;height:17.9px;background:#fff;border:1px solid #b4b4b4"></div>
<div class="a" style="left:879.5px;top:185.3px;width:16.0px;height:17.9px;background:#e9e9e9;border:1px solid #b8b8b8"></div>
<svg class="a" style="left:879.5px;top:185.3px" width="16.0" height="17.9" viewBox="0 0 16.0 17.9"><path d="M1 8.9H15.0" stroke="#c8c8c8"/><path d="M6.0 6.4L8.0 4.1L10.0 6.4Z M6.0 11.4L8.0 13.7L10.0 11.4Z" fill="#333"/></svg>
<div class="t" style="left:822px;top:191px;font-size:9.2px;color:#222;transform:scaleX(0.9);transform-origin:0 0">0.01</div>
<div class="t" style="left:692.4px;width:120px;text-align:right;top:214.7px;font-size:8.9px;color:#222;transform:scaleX(0.96);transform-origin:100% 0">Stop Loss:</div>
<div class="a" style="left:818.2px;top:208.8px;width:61.3px;height:18.0px;background:#fff;border:1px solid #b4b4b4"></div>
<div class="a" style="left:879.5px;top:208.8px;width:16.0px;height:18.0px;background:#e9e9e9;border:1px solid #b8b8b8"></div>
<svg class="a" style="left:879.5px;top:208.8px" width="16.0" height="18.0" viewBox="0 0 16.0 18.0"><path d="M1 9.0H15.0" stroke="#c8c8c8"/><path d="M6.0 6.5L8.0 4.2L10.0 6.5Z M6.0 11.5L8.0 13.8L10.0 11.5Z" fill="#333"/></svg>
<div class="t" style="left:822px;top:214.5px;font-size:9.2px;color:#222;transform:scaleX(0.9);transform-origin:0 0">100.491</div>
<div class="t" style="left:866.5px;width:120px;text-align:right;top:214.7px;font-size:8.9px;color:#222;transform:scaleX(0.96);transform-origin:100% 0">Take Profit:</div>
<div class="a" style="left:992px;top:208.8px;width:61.5px;height:18.0px;background:#fff;border:1px solid #b4b4b4"></div>
<div class="a" style="left:1053.5px;top:208.8px;width:16.4px;height:18.0px;background:#e9e9e9;border:1px solid #b8b8b8"></div>
<svg class="a" style="left:1053.5px;top:208.8px" width="16.4" height="18.0" viewBox="0 0 16.4 18.0"><path d="M1 9.0H15.4" stroke="#c8c8c8"/><path d="M6.2 6.5L8.2 4.2L10.2 6.5Z M6.2 11.5L8.2 13.8L10.2 11.5Z" fill="#333"/></svg>
<div class="t" style="left:996px;top:214.5px;font-size:9.2px;color:#222;transform:scaleX(0.9);transform-origin:0 0">100.185</div>
<div class="t" style="left:692.4px;width:120px;text-align:right;top:237.5px;font-size:8.9px;color:#222;transform:scaleX(0.96);transform-origin:100% 0">Comment:</div>
<div class="a" style="left:818.2px;top:231.7px;width:251.7px;height:17.9px;background:#fff;border:1px solid #b4b4b4"></div>
<div class="t" style="left:692.4px;width:120px;text-align:right;top:261.5px;font-size:8.9px;color:#222;transform:scaleX(0.96);transform-origin:100% 0">Type:</div>
<div class="a" style="left:818.2px;top:255.5px;width:251.7px;height:18.0px;background:#fff;border:1px solid #b4b4b4"></div>
<div class="t" style="left:822px;top:261px;font-size:9.2px;color:#222;transform:scaleX(0.9);transform-origin:0 0">Pending order</div>
<svg class="a" style="left:1058px;top:262px" width="9" height="6" viewBox="0 0 9 6"><path d="M0.8 0.8L4.5 4.6L8.2 0.8" stroke="#333" stroke-width="1.1" fill="none"/></svg>
<div class="a" style="left:740.6px;top:286px;width:339.2px;height:163.5px;border:1px solid #dcdcdc;border-radius:2px"></div>
<div class="a" style="left:746px;top:282px;width:62px;height:8px;background:#f0f0f0"></div>
<div class="t" style="left:750.3px;top:281.5px;font-size:8.8px;color:#222;transform:scaleX(0.95);transform-origin:0 0">Pending order</div>
<div class="t" style="left:693px;width:120px;text-align:right;top:302.4px;font-size:8.8px;color:#222;transform:scaleX(0.96);transform-origin:100% 0">Type:</div>
<div class="a" style="left:818.3px;top:295.4px;width:116.7px;height:18.8px;background:#fff;border:1px solid #a8a8a8"></div>
<div class="t" style="left:822px;top:302px;font-size:8.8px;color:#222;transform:scaleX(0.9);transform-origin:0 0">Sell Limit</div>
<svg class="a" style="left:924px;top:302px" width="9" height="6" viewBox="0 0 9 6"><path d="M0.8 0.8L4.5 4.6L8.2 0.8" stroke="#333" stroke-width="1.1" fill="none"/></svg>
<div class="t" style="left:940.2px;top:302.2px;font-size:8.8px;color:#222;transform:scaleX(0.9);transform-origin:0 0">AUDJPY 0.01</div>
<div class="t" style="left:693px;width:120px;text-align:right;top:325.3px;font-size:8.8px;color:#222;transform:scaleX(0.96);transform-origin:100% 0">at price:</div>
<div class="a" style="left:818.3px;top:320.2px;width:100.0px;height:17.6px;background:#fff;border:1px solid #b4b4b4"></div>
<div class="a" style="left:918.3px;top:320.2px;width:15.9px;height:17.6px;background:#e9e9e9;border:1px solid #b8b8b8"></div>
<svg class="a" style="left:918.3px;top:320.2px" width="15.9" height="17.6" viewBox="0 0 15.9 17.6"><path d="M1 8.8H14.9" stroke="#c8c8c8"/><path d="M6.0 6.3L8.0 4.0L10.0 6.3Z M6.0 11.3L8.0 13.6L10.0 11.3Z" fill="#333"/></svg>
<div class="t" style="left:822px;top:325.5px;font-size:8.8px;color:#222;transform:scaleX(0.9);transform-origin:0 0">100.709</div>
<div class="a" style="left:940.2px;top:319.5px;width:116.7px;height:17.6px;background:#f38080;border:1px solid #d86a6a"></div>
<div class="t" style="left:987.5px;top:324.5px;font-size:8.8px;color:#4a1010;transform:scaleX(0.95);transform-origin:0 0">Place</div>
<div class="t" style="left:693px;width:120px;text-align:right;top:349px;font-size:8.8px;color:#222;transform:scaleX(0.96);transform-origin:100% 0">Expiry:</div>
<div class="a" style="left:818.3px;top:348.4px;width:10.5px;height:9.5px;background:#fff;border:1px solid #666;border-radius:1px"></div>
<div class="a" style="left:834.2px;top:344.2px;width:100.0px;height:17.0px;background:#ededed;border:1px solid #d8d8d8"></div>
<div class="t" style="left:838px;top:349px;font-size:8.8px;color:#555;letter-spacing:0.35px">04.11.2024 03:11</div>
<div class="t" style="left:780.5px;top:372.2px;font-size:8.8px;color:#222;transform:scaleX(0.985);transform-origin:0 0">Open price you set must differ from market price by at least 0 points</div>
</body></html>
